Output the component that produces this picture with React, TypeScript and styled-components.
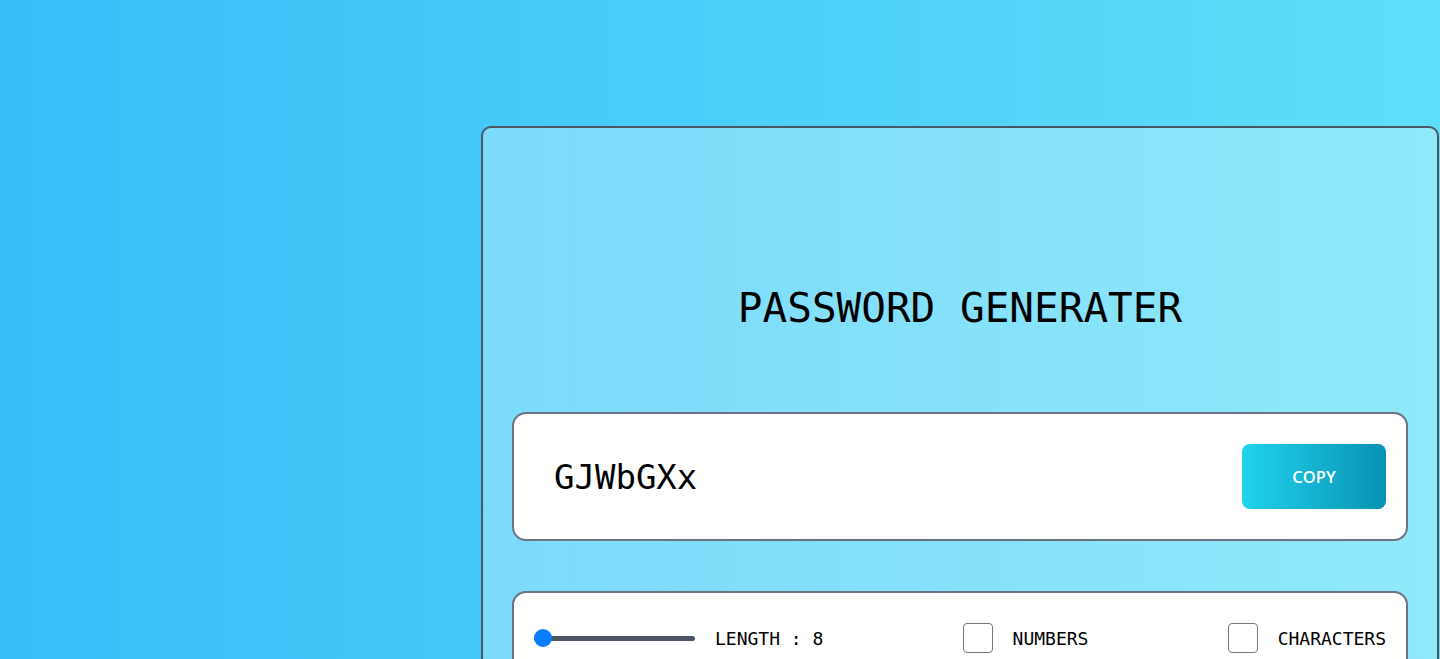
import React, { useState } from "react";
import styled, { createGlobalStyle } from "styled-components";

const GlobalStyle = createGlobalStyle`
  * {
    box-sizing: border-box;
  }
  body {
    margin: 0;
    font-family: "DejaVu Sans Mono", monospace;
  }
`;

const Page = styled.div`
  min-height: 100vh;
  padding: 126px 0 40px 481px;
  background: linear-gradient(to right, #38bdf8, #5edff9);
`;

const Card = styled.div`
  width: 958px;
  border: 2px solid #4b5563;
  border-radius: 10px;
  padding: 156px 29px 40px;
  background: linear-gradient(to right, #7cdafb, #8fe9fa);
`;

const Title = styled.h1`
  margin: 0 0 80px;
  text-align: center;
  font-family: "DejaVu Sans Mono", monospace;
  font-size: 41px;
  font-weight: 400;
  line-height: normal;
  color: #000;
`;

const Panel = styled.div<{ $pad: string }>`
  display: flex;
  align-items: center;
  justify-content: space-between;
  background: #fff;
  border: 2px solid #6b7280;
  border-radius: 14px;
  padding: ${(p) => p.$pad};
`;

const InputPanel = styled(Panel)`
  height: 129px;
  margin-bottom: 50px;
`;

const Password = styled.span`
  font-family: "DejaVu Sans Mono", monospace;
  font-size: 34px;
  color: #000;
`;

const CopyButton = styled.button`
  width: 144px;
  height: 65px;
  border: none;
  border-radius: 8px;
  background: linear-gradient(to right, #22d3ee, #0891b2);
  color: #fff;
  font-family: "Open Sans", sans-serif;
  font-weight: 600;
  font-size: 16.5px;
  cursor: pointer;
`;

const Group = styled.label`
  display: flex;
  align-items: center;
  gap: 20px;
  font-family: "DejaVu Sans Mono", monospace;
  font-size: 18px;
  color: #000;
`;

const Range = styled.input`
  -webkit-appearance: none;
  appearance: none;
  width: 161px;
  height: 5px;
  margin: 0;
  border-radius: 3px;
  background: #4b5563;
  outline: none;

  &::-webkit-slider-thumb {
    -webkit-appearance: none;
    appearance: none;
    width: 18px;
    height: 18px;
    border-radius: 50%;
    background: #0a7cff;
    cursor: pointer;
  }
`;

const Check = styled.input`
  -webkit-appearance: none;
  appearance: none;
  width: 30px;
  height: 30px;
  margin: 0;
  border: 1px solid #767676;
  border-radius: 4px;
  background: #fff;
`;

export default function App() {
  const [length, setLength] = useState(8);
  return (
    <>
      <GlobalStyle />
      <Page>
        <Card>
          <Title>PASSWORD GENERATER</Title>
          <InputPanel $pad="0 20px 0 40px">
            <Password>GJWbGXx</Password>
            <CopyButton>COPY</CopyButton>
          </InputPanel>
          <Panel $pad="30px 20px">
            <Group>
              <Range
                type="range"
                min={8}
                max={50}
                value={length}
                onChange={(e) => setLength(Number(e.target.value))}
              />
              LENGTH : {length}
            </Group>
            <Group>
              <Check type="checkbox" />
              NUMBERS
            </Group>
            <Group>
              <Check type="checkbox" />
              CHARACTERS
            </Group>
          </Panel>
        </Card>
      </Page>
    </>
  );
}
